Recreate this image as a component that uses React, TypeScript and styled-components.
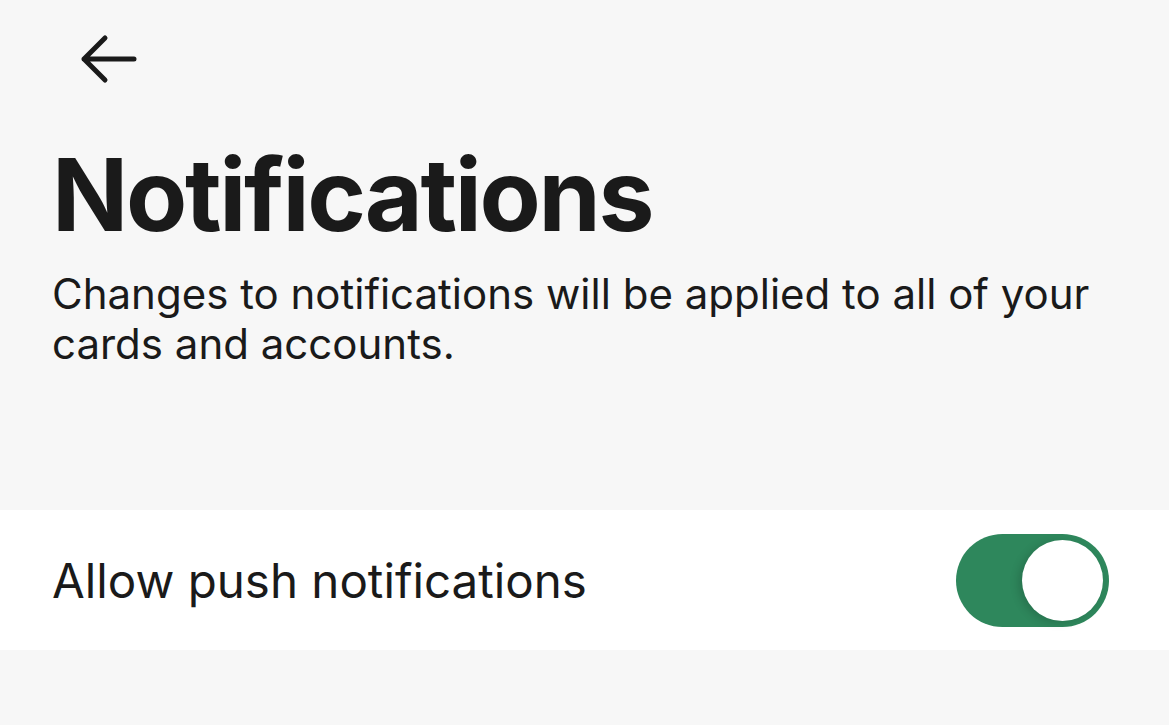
import React, { useState } from "react";
import styled, { createGlobalStyle } from "styled-components";

const Global = createGlobalStyle`
  html, body {
    margin: 0;
    padding: 0;
    background: #f7f7f7;
  }
  body {
    font-family: Inter, "Noto Sans", sans-serif;
    color: #1a1a1a;
  }
`;

const App = () => {
  const [on, setOn] = useState(true);
  return (
    <Page>
      <Global />
      <TopBar>
        <BackButton aria-label="Back">
          <svg width="58" height="50" viewBox="0 0 58 50" fill="none">
            <path
              d="M54 25H4M25 4L4 25L25 46"
              stroke="#1a1a1a"
              strokeWidth="5"
              strokeLinecap="round"
              strokeLinejoin="round"
            />
          </svg>
        </BackButton>
      </TopBar>
      <Header>
        <Title>Notifications</Title>
        <Subtitle>
          Changes to notifications will be applied to all of your cards and accounts.
        </Subtitle>
      </Header>
      <Row>
        <RowLabel>Allow push notifications</RowLabel>
        <Toggle $on={on} onClick={() => setOn(!on)} aria-pressed={on}>
          <Knob $on={on} />
        </Toggle>
      </Row>
    </Page>
  );
};

export default App;

const Page = styled.div`
  width: 1169px;
  height: 725px;
  background: #f7f7f7;
  display: flex;
  flex-direction: column;
`;

const TopBar = styled.div`
  height: 120px;
  padding-left: 80px;
  display: flex;
  align-items: flex-start;
  padding-top: 34px;
  box-sizing: border-box;
`;

const BackButton = styled.button`
  border: none;
  background: none;
  padding: 0;
  cursor: pointer;
  display: flex;
`;

const Header = styled.div`
  padding: 15px 52px 0;
  height: 390px;
  box-sizing: border-box;
`;

const Title = styled.h1`
  margin: 0;
  font-size: 100px;
  font-weight: 700;
  line-height: 120px;
  letter-spacing: -2.3px;
  color: #1a1a1a;
`;

const Subtitle = styled.p`
  margin: 14px 0 0;
  font-size: 42px;
  line-height: 50px;
  font-weight: 400;
  color: #1a1a1a;
`;

const Row = styled.div`
  height: 140px;
  background: #ffffff;
  display: flex;
  align-items: center;
  justify-content: space-between;
  padding: 0 60px 0 52px;
`;

const RowLabel = styled.span`
  font-size: 47.5px;
  font-weight: 400;
  color: #1a1a1a;
`;

const Toggle = styled.button<{ $on: boolean }>`
  width: 153px;
  height: 93px;
  border-radius: 47px;
  border: none;
  padding: 6px;
  box-sizing: border-box;
  background: ${(p) => (p.$on ? "#2e875c" : "#c8c8c8")};
  display: flex;
  justify-content: ${(p) => (p.$on ? "flex-end" : "flex-start")};
  align-items: center;
  cursor: pointer;
`;

const Knob = styled.span<{ $on: boolean }>`
  width: 81px;
  height: 81px;
  border-radius: 50%;
  background: #ffffff;
  box-shadow: -4px 2px 8px rgba(0, 0, 0, 0.15);
`;
